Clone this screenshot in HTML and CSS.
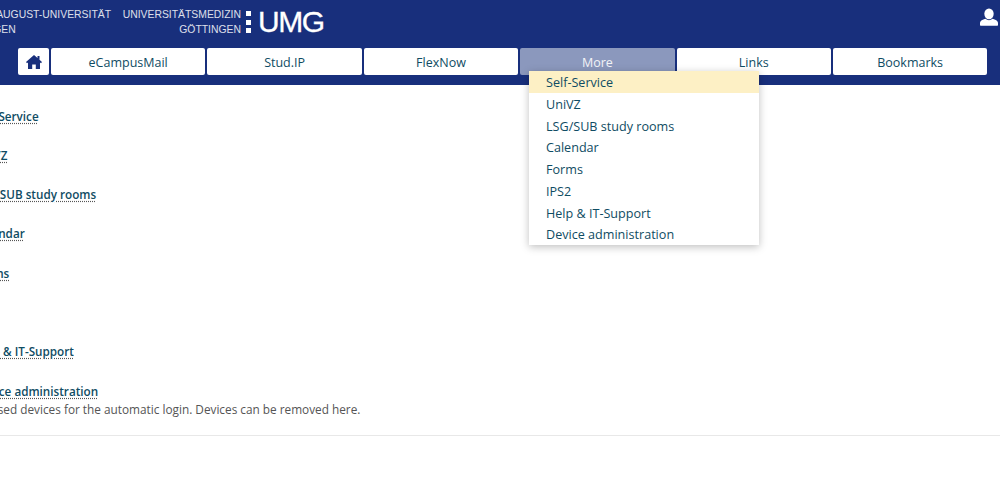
FILE: index.html
```html
<!DOCTYPE html>
<html lang="en">
<head>
  <meta charset="UTF-8">
  <meta name="viewport" content="width=device-width, initial-scale=1.0">
  <title>More</title>
  <link rel="stylesheet" href="styles.css">
</head>
<body>
  <header class="top-bar">
    <div class="brand-row">
      <div class="brand-uni">GEORG-AUGUST-UNIVERSITÄT<br>GÖTTINGEN</div>
      <div class="brand-med">UNIVERSITÄTSMEDIZIN<br>GÖTTINGEN</div>
      <div class="brand-dots"><span></span><span></span><span></span></div>
      <div class="brand-umg">UMG</div>
      <svg class="user-icon" width="18" height="18" viewBox="0 0 20 20"><ellipse cx="10" cy="6.5" rx="5.2" ry="6"/><path d="M0 19v-2.500c0-2.200 3-3.600 6-4.500 1.200 1 2.600 1.500 4 1.500s2.800-.5 4-1.500c3 .9 6 2.300 6 4.500V19c0 .4-.3.700-.7.700H.7c-.4 0-.7-.3-.7-.7z"/></svg>
    </div>
    <nav class="nav-row">
      <a class="nav-home" href="#">
        <svg width="16" height="14" viewBox="0 0 16 14"><path d="M8 0 0 7l1 1.200L2 7.400V14h4.200V9.500h3.600V14H14V7.400l1 .8L16 7l-2.500-2.200V1h-2v2L8 0z"/></svg>
      </a>
      <a class="nav-btn" href="#">eCampusMail</a>
      <a class="nav-btn" href="#">Stud.IP</a>
      <a class="nav-btn" href="#">FlexNow</a>
      <a class="nav-btn nav-active" href="#">More</a>
      <a class="nav-btn" href="#">Links</a>
      <a class="nav-btn" href="#">Bookmarks</a>
    </nav>
  </header>

  <ul class="dropdown">
    <li class="dropdown-hover">Self-Service</li>
    <li>UniVZ</li>
    <li>LSG/SUB study rooms</li>
    <li>Calendar</li>
    <li>Forms</li>
    <li>IPS2</li>
    <li>Help &amp; IT-Support</li>
    <li>Device administration</li>
  </ul>

  <main class="content">
    <div class="entry"><a href="#">Self-Service</a></div>
    <div class="entry"><a href="#">UniVZ</a></div>
    <div class="entry"><a href="#">LSG/SUB study rooms</a></div>
    <div class="entry"><a href="#">Calendar</a></div>
    <div class="entry"><a href="#">Forms</a></div>
    <div class="entry"><a href="#">IPS2</a></div>
    <div class="entry"><a href="#">Help &amp; IT-Support</a></div>
    <div class="entry"><a href="#">Device administration</a>
      <p>All used devices for the automatic login. Devices can be removed here.</p>
    </div>
  </main>
  <div class="rule"></div>
</body>
</html>
```
FILE: styles.css
```css
html, body {
  margin: 0;
  padding: 0;
  height: 100%;
  overflow: hidden;
}
body {
  background-color: white;
  font-family: "Open Sans", "Noto Sans", sans-serif;
  font-size: 12.6px;
  color: #555;
}
.top-bar {
  background-color: #182f7c;
  height: 85px;
  box-sizing: border-box;
  overflow: hidden;
}
.brand-row {
  display: flex;
  height: 48px;
  color: white;
}
.brand-uni {
  font-family: "Liberation Sans", sans-serif;
  font-size: 10.4px;
  line-height: 15px;
  width: 153px;
  flex-shrink: 0;
  margin-left: -46px;
  padding-top: 7px;
  white-space: nowrap;
  opacity: 0.85;
}
.brand-med {
  font-family: "Liberation Sans", sans-serif;
  font-size: 10.4px;
  line-height: 15px;
  width: 119px;
  margin-left: 15px;
  padding-top: 7px;
  text-align: right;
  white-space: nowrap;
  opacity: 0.85;
}
.brand-dots {
  display: flex;
  flex-direction: column;
  gap: 3.500px;
  margin-left: 5px;
  padding-top: 11px;
}
.brand-dots span {
  display: block;
  width: 5px;
  height: 5px;
  background: white;
}
.brand-umg {
  font-family: "Liberation Sans", sans-serif;
  font-size: 30px;
  line-height: 28px;
  margin-left: 7px;
  padding-top: 8px;
  letter-spacing: -1.500px;
  -webkit-text-stroke: 0.3px white;
}
.user-icon {
  fill: white;
  margin-left: auto;
  margin-top: 8px;
  margin-right: 2px;
}
.nav-row {
  display: flex;
  gap: 2px;
  padding-left: 18px;
  height: 27px;
}
.nav-row a {
  box-sizing: border-box;
  background: white;
  border-radius: 2px;
  color: #0f4c63;
  text-decoration: none;
  display: flex;
  align-items: center;
  justify-content: center;
  font-size: 12.5px;
  padding-top: 1px;
}
.nav-home {
  width: 31px;
  fill: #182f7c;
}
.nav-btn {
  width: 154.400px;
}
.nav-row .nav-active {
  background: #8b98bd;
  color: #f2f3f7;
}
.dropdown {
  position: absolute;
  left: 529px;
  top: 71px;
  width: 230px;
  margin: 0;
  padding: 0;
  list-style: none;
  background: white;
  box-shadow: 0 2px 8px rgba(0, 0, 0, 0.25);
  color: #0f4c63;
}
.dropdown li {
  box-sizing: border-box;
  height: 21.750px;
  line-height: 20.750px;
  padding: 2px 0 0 17px;
}
.dropdown .dropdown-hover {
  background: #fdf0c5;
}
.content {
  margin-left: -26px;
  padding-top: 21.500px;
  font-size: 11.700px;
}
.entry {
  height: 39.300px;
  line-height: 18px;
}
.entry a {
  color: #0f4c63;
  font-weight: 600;
  text-decoration: underline dotted #555;
  text-underline-offset: 2px;
}
.entry p {
  margin: 0;
  font-size: 11.800px;
}
.rule {
  margin-top: 14.500px;
  border-top: 1px solid #e8e8e8;
}
```
